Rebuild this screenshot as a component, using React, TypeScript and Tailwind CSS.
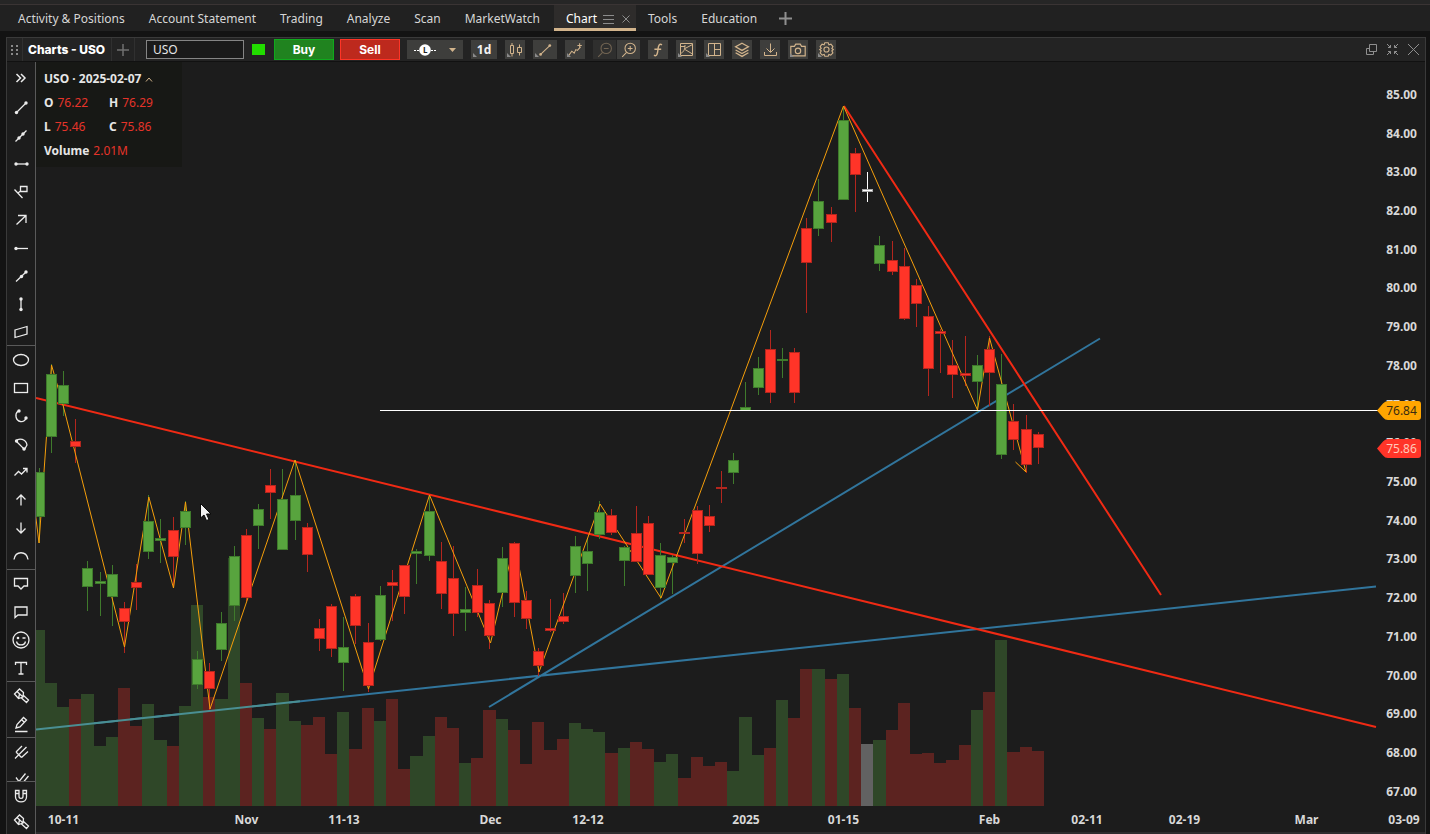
import React from "react";

/* ---------- chart data ---------- */

type Kind = "u" | "d" | "n";
// [kind, body top, body bottom, wick top, wick bottom, volume top]
type Bar = [Kind, number, number, number, number, number];

const BARS: Bar[] = [
  ["u", 472, 517, 468, 543, 630],
  ["u", 374, 437, 364, 453, 683],
  ["u", 385, 404, 371, 416, 707],
  ["d", 441, 447, 419, 463, 699],
  ["u", 568, 587, 561, 611, 694],
  ["u", 581, 584, 572, 616, 746],
  ["u", 574, 597, 565, 626, 737],
  ["d", 608, 622, 602, 653, 688],
  ["d", 582, 588, 564, 610, 726],
  ["u", 521, 552, 495, 559, 704],
  ["u", 538, 541, 519, 563, 740],
  ["d", 530, 557, 517, 588, 746],
  ["u", 511, 528, 501, 545, 706],
  ["u", 659, 685, 651, 689, 605],
  ["d", 671, 689, 663, 710, 697],
  ["u", 623, 650, 612, 661, 699],
  ["u", 556, 606, 546, 621, 558],
  ["d", 535, 598, 529, 601, 683],
  ["u", 509, 526, 504, 549, 718],
  ["d", 485, 493, 469, 519, 729],
  ["u", 499, 550, 469, 550, 693],
  ["u", 495, 521, 460, 540, 721],
  ["d", 527, 555, 523, 572, 725],
  ["d", 628, 639, 619, 651, 717],
  ["d", 606, 649, 604, 657, 754],
  ["u", 647, 663, 617, 691, 712],
  ["d", 596, 626, 594, 644, 749],
  ["d", 642, 686, 623, 692, 708],
  ["u", 595, 640, 586, 641, 721],
  ["d", 582, 586, 570, 621, 699],
  ["d", 565, 597, 565, 614, 769],
  ["u", 551, 554, 549, 584, 756],
  ["u", 511, 556, 495, 561, 736],
  ["d", 561, 594, 542, 609, 717],
  ["d", 578, 614, 546, 636, 728],
  ["u", 609, 613, 587, 631, 763],
  ["d", 585, 613, 569, 617, 758],
  ["d", 603, 636, 600, 649, 710],
  ["u", 558, 593, 547, 607, 719],
  ["d", 543, 603, 542, 617, 730],
  ["d", 600, 619, 591, 629, 764],
  ["d", 651, 666, 648, 676, 722],
  ["d", 628, 631, 599, 632, 750],
  ["d", 616, 622, 593, 624, 739],
  ["u", 546, 576, 536, 593, 723],
  ["u", 551, 564, 538, 591, 729],
  ["u", 512, 535, 501, 539, 732],
  ["d", 515, 533, 509, 535, 753],
  ["u", 547, 561, 546, 586, 748],
  ["d", 533, 562, 506, 562, 742],
  ["d", 523, 575, 516, 575, 749],
  ["u", 555, 588, 543, 599, 762],
  ["u", 557, 563, 555, 594, 754],
  ["d", 532, 534, 519, 543, 778],
  ["d", 510, 554, 506, 564, 757],
  ["d", 516, 526, 505, 532, 766],
  ["d", 487, 489, 471, 503, 762],
  ["u", 460, 473, 453, 484, 771],
  ["u", 407, 411, 382, 411, 717],
  ["u", 368, 388, 357, 395, 755],
  ["d", 349, 393, 330, 403, 748],
  ["u", 359, 361, 348, 378, 700],
  ["d", 352, 393, 348, 403, 718],
  ["d", 228, 263, 218, 313, 669],
  ["u", 201, 229, 179, 236, 669],
  ["d", 214, 223, 207, 242, 679],
  ["u", 120, 200, 107, 200, 674],
  ["d", 153, 175, 148, 212, 708],
  ["n", 189, 192, 172, 202, 744],
  ["u", 245, 264, 236, 271, 740],
  ["d", 260, 272, 241, 275, 730],
  ["d", 266, 319, 248, 320, 703],
  ["d", 285, 304, 279, 327, 754],
  ["d", 316, 369, 306, 396, 753],
  ["d", 331, 334, 329, 373, 763],
  ["d", 365, 375, 340, 398, 760],
  ["d", 373, 376, 336, 386, 745],
  ["u", 365, 382, 355, 412, 710],
  ["d", 349, 373, 336, 406, 692],
  ["u", 384, 455, 354, 459, 640],
  ["d", 421, 440, 404, 450, 752],
  ["d", 429, 465, 415, 473, 747],
  ["d", 434, 448, 432, 464, 751],
];

const BODY = { u: "#58a43e", d: "#ff3428", n: "#ffffff" };
const EDGE = { u: "#3f7a2c", d: "#b3261e", n: "#a9a9a9" };
const WICK = { u: "#3f7a2c", d: "#b3261e", n: "#ffffff" };
const VOL = { u: "#2f4728", d: "#5c2320", n: "#626262" };

const column = (i: number) => Math.floor(39.12 + 12.185 * i);
const priceY = (p: number) => Math.floor(94.3 + (85 - p) * 38.72);

const PRICES = Array.from({ length: 19 }, (_, i) => 85 - i);
const DATES: [number, string][] = [
  [63.5, "10-11"],
  [246.5, "Nov"],
  [344, "11-13"],
  [490.5, "Dec"],
  [588, "12-12"],
  [746, "2025"],
  [843.5, "01-15"],
  [989.5, "Feb"],
  [1087, "02-11"],
  [1184.5, "02-19"],
  [1306.5, "Mar"],
  [1404, "03-09"],
];

const ZIGZAG =
  "30,470 39,543 51.5,365 63,405 124.5,647 148.8,497 173.5,588 185.5,502 210,709 295,460 368.5,689 429.5,495 490.5,643 514.5,543 539,672 600,504 661,598 843.5,106 977.5,410 989.5,338 1026,472 1015.5,462";

function PriceTag({ y, fill, color, label }: { y: number; fill: string; color: string; label: string }) {
  return (
    <g>
      <path
        d={`M1377 ${y}L1383 ${y - 7}Q1385 ${y - 9.5} 1388 ${y - 9.5}H1418Q1421 ${y - 9.5} 1421 ${y - 6.5}V${y + 6.5}Q1421 ${y + 9.5} 1418 ${y + 9.5}H1388Q1385 ${y + 9.5} 1383 ${y + 7}Z`}
        fill={fill}
      />
      <text x="1401.5" y={y + 4.5} textAnchor="middle" fill={color} className="text-[12px]">
        {label}
      </text>
    </g>
  );
}

function PriceChart() {
  return (
    <svg
      viewBox="36 62 1389 770"
      preserveAspectRatio="xMinYMin meet"
      className="block h-full w-full"
      role="img"
      aria-label="USO daily candlestick chart"
    >
      <g fill="none">
        <path d="M36 729.5L1376 586.5M489 707L1100 338.5" stroke="#31759c" strokeWidth="2" />
        <path d="M36 398L1376 727M844 106L1161 595" stroke="#f02a14" strokeWidth="2" />
      </g>
      <g shapeRendering="crispEdges">
        {BARS.map((b, i) => {
          const left = Math.max(36, column(i) - 6);
          return (
            <rect key={i} x={left} y={b[5]} width={column(i + 1) - 6 - left} height={806 - b[5]} fill={VOL[b[0]]} />
          );
        })}
      </g>
      <path d="M36 729.5L300 701.3" stroke="#4a8f93" strokeWidth="2" />
      <g shapeRendering="crispEdges">
        {BARS.map((b, i) => (
          <rect key={i} x={column(i)} y={b[3]} width={1} height={b[4] - b[3]} fill={WICK[b[0]]} />
        ))}
      </g>
      <polyline points={ZIGZAG} fill="none" stroke="#f59e0b" strokeWidth="1" />
      <g shapeRendering="crispEdges">
        {BARS.map((b, i) => {
          const left = Math.max(36, column(i) - 5);
          const width = column(i) + 6 - left;
          const height = b[2] - b[1];
          return (
            <g key={i}>
              <rect x={left} y={b[1]} width={width} height={height} fill={EDGE[b[0]]} />
              {height > 2 && (
                <rect x={left + 1} y={b[1] + 1} width={width - 2} height={height - 2} fill={BODY[b[0]]} />
              )}
            </g>
          );
        })}
      </g>
      <path d="M380 410.5H1378" stroke="#fff" strokeWidth="1" />

      <g fill="#d8d8d8" className="text-[12px] font-bold">
        {PRICES.map((p) => (
          <text key={p} x="1417" y={priceY(p) + 5} textAnchor="end">
            {p.toFixed(2)}
          </text>
        ))}
        {DATES.map(([x, label]) => (
          <text key={label} x={x} y="824" textAnchor="middle">
            {label}
          </text>
        ))}
      </g>
      <PriceTag y={410.5} fill="#ffa500" color="#3a2c10" label="76.84" />
      <PriceTag y={448.5} fill="#ff3428" color="#ffc9b8" label="75.86" />
      <path
        d="M200.5 503.5V518L204 515L206.500 520.500L209 519.500L206.500 514H211Z"
        fill="#f2f2f2"
        stroke="#0b0b0b"
        strokeWidth="1"
      />
    </svg>
  );
}

/* ---------- icons ---------- */

function Icon({ children, size = 20 }: { children: React.ReactNode; size?: number }) {
  return (
    <svg
      width={size}
      height={size}
      viewBox="0 0 20 20"
      fill="none"
      stroke="currentColor"
      strokeWidth="1.3"
      aria-hidden="true"
      className="shrink-0"
    >
      {children}
    </svg>
  );
}

// Icon drawn on a 16px grid so that its straight strokes fall on whole pixels.
function GridIcon({ d }: { d: string }) {
  return (
    <svg width="16" height="17" viewBox="0 0 16 17" fill="none" stroke="currentColor" aria-hidden="true" className="shrink-0">
      <path d={d} />
    </svg>
  );
}

const dot = (x: number, y: number) => <circle cx={x} cy={y} r="1.7" fill="currentColor" stroke="none" />;

const MARKER = (
  <Icon>
    <path d="M3.500 8L8.500 3L12.500 6.500L12 11L7.500 12.500ZM6 5.500L12 11M7.500 12.500L8.500 8M12.500 9.500L17.500 14L15.500 16.500L10.500 12" />
  </Icon>
);

const GROUP_LINES: [string, React.ReactNode][] = [
  ["Trend line", <Icon>{dot(5.5, 14.5)}{dot(15, 5)}<path d="M5.500 14.500L15 5" /></Icon>],
  ["Extended line", <Icon><path d="M4.500 15.500L15.500 4.500" />{dot(8, 12)}{dot(12, 8)}</Icon>],
  ["Segment", <Icon>{dot(5, 10)}{dot(16, 10)}<path d="M5 10H16" /></Icon>],
  ["Callout line", <Icon><path d="M3.500 7.500L11.500 16M9.500 4.500H16V9.500H9.500ZM7 11L9.500 9" /></Icon>],
  ["Arrow", <Icon><path d="M5.500 14.500L15 5.500M7 5.500H15V13" /></Icon>],
  ["Ray", <Icon>{dot(5, 10.5)}<path d="M5 10.500H17" /></Icon>],
  ["Angled ray", <Icon><path d="M5 15.500L15 6" />{dot(10.5, 10.5)}{dot(15, 6)}</Icon>],
  ["Vertical line", <Icon>{dot(10, 5)}{dot(10, 15.5)}<path d="M10 5V15" /></Icon>],
  ["Channel", <Icon><path d="M4 8L16 4.500V12L4 15.500Z" /></Icon>],
];

const GROUP_SHAPES: [string, React.ReactNode][] = [
  ["Ellipse", <Icon><ellipse cx="10" cy="10" rx="7.500" ry="5.500" /></Icon>],
  ["Rectangle", <Icon><rect x="3.500" y="5.500" width="13" height="9" /></Icon>],
  ["Arc", <Icon><path d="M7 5C3.500 8 4.500 14.500 9.500 15.500C12.500 16 14.500 14 15 12" />{dot(8, 5)}{dot(15, 12)}</Icon>],
  ["Sector", <Icon><path d="M5 7C8 3.500 15 5 16 11L13.500 15.500Z" />{dot(5.5, 7)}{dot(13, 15)}</Icon>],
  ["Zigzag arrow", <Icon><path d="M3.500 13.500L7.500 9.500L10.500 12L16 6.500M12 6.500H16V10.500" /></Icon>],
  ["Arrow up", <Icon><path d="M10 15.500V5M5.500 9.500L10 5L14.500 9.500" /></Icon>],
  ["Arrow down", <Icon><path d="M10 4.500V15M5.500 10.500L10 15L14.500 10.500" /></Icon>],
  ["Curve", <Icon><path d="M3 13.500C4.500 4.500 15.500 4.500 17 13.500" /></Icon>],
];

const GROUP_NOTES: [string, React.ReactNode][] = [
  ["Balloon", <Icon><path d="M3.500 4.500H16.500V12H13L10 15L7 12H3.500Z" /></Icon>],
  ["Comment", <Icon><path d="M4 5H16V13H7L4 15.500Z" /></Icon>],
  [
    "Emoji",
    <Icon>
      <circle cx="10" cy="10" r="8" />
      <path d="M5.500 11.500C6.500 16 13.500 16 14.500 11.500M11.500 8H14.500" />
      <circle cx="7" cy="8" r="1.300" fill="currentColor" stroke="none" />
    </Icon>,
  ],
  ["Text", <Icon><path d="M4.500 7V4.500H15.500V7M10 4.500V16M7.500 16H12.500" /></Icon>],
];

const GROUP_DRAW: [string, React.ReactNode][] = [
  ["Brush", MARKER],
  ["Pencil", <Icon><path d="M5 14L6 10.500L12.500 3.500L15.500 6L9 13Z M4 17.500H16.500M10.500 5.500L13.500 8.500" /></Icon>],
];

const PITCHFORK = (
  <Icon>
    <path d="M4 16.500L7.500 13M5 10L10.500 15.500M5 10L11 4M7.500 13L15.500 5M10.500 15.500L17 9.500" />
  </Icon>
);

function ToolGroup({ tools }: { tools: [string, React.ReactNode][] }) {
  return (
    <div className="relative flex shrink-0 flex-col after:absolute after:bottom-0 after:h-px after:w-full after:bg-[#5a5a5a]">
      {tools.map(([label, icon]) => (
        <button key={label} aria-label={label} className="flex h-7 items-center justify-center">
          {icon}
        </button>
      ))}
    </div>
  );
}

function Sidebar() {
  return (
    <aside className="flex w-[29px] shrink-0 flex-col border-r border-[#5a5a5a] bg-[#1c1c1c] text-[#ececec]">
      <div className="flex min-h-0 flex-1 flex-col overflow-hidden">
        <button aria-label="Expand tools" className="flex h-8 shrink-0 items-center justify-center">
          <Icon><path d="M5.500 6L9.500 10L5.500 14M10 6L14 10L10 14" strokeWidth="1.500" /></Icon>
        </button>
        <ToolGroup tools={GROUP_LINES} />
        <ToolGroup tools={GROUP_SHAPES} />
        <ToolGroup tools={GROUP_NOTES} />
        <ToolGroup tools={GROUP_DRAW} />
        <button aria-label="Pitchfork" className="flex h-7 shrink-0 items-center justify-center">{PITCHFORK}</button>
        <button aria-label="Fan" className="flex h-7 shrink-0 items-center justify-center">
          <Icon><path d="M14.500 3.500L6 14M17.500 6L10 15M5 7.500L9 13" /></Icon>
        </button>
      </div>
      <div className="flex shrink-0 flex-col border-t border-[#5a5a5a]">
        <button aria-label="Magnet" className="flex h-7 items-center justify-center">
          <Icon><path d="M4.500 4.500H8V10.500C8 13 12 13 12 10.500V4.500H15.500V11C15.500 17.500 4.500 17.500 4.500 11ZM4.500 7.500H8M12 7.500H15.500" /></Icon>
        </button>
        <button aria-label="Eraser" className="flex h-6 items-center justify-center">{MARKER}</button>
      </div>
    </aside>
  );
}

/* ---------- bars ---------- */

function Tab({ children }: { children: React.ReactNode }) {
  return (
    <a href="#" className="flex items-center px-3 pt-0.5 text-[#d6d6d6]">
      {children}
    </a>
  );
}

function NavTabs() {
  return (
    <nav className="flex h-[26px] shrink-0 bg-[#212121] pl-[6px] text-[12px] whitespace-nowrap">
      <Tab>Activity &amp; Positions</Tab>
      <Tab>Account Statement</Tab>
      <Tab>Trading</Tab>
      <Tab>Analyze</Tab>
      <Tab>Scan</Tab>
      <Tab>MarketWatch</Tab>
      <div className="ml-0.5 flex items-center border-b-3 border-[#d2b48c] bg-[#2e2c2b] pt-[5px] pr-1.5 pl-3 text-white">
        <a href="#" aria-current="page">Chart</a>
        <button aria-label="Tab menu" className="ml-1.5 text-[#8c8c8c]">
          <svg width="11" height="10" viewBox="0 0 11 10" className="block" stroke="currentColor">
            <path d="M0 1.500H11M0 5.500H11M0 9.500H11" />
          </svg>
        </button>
        <button aria-label="Close tab" className="ml-2 text-[#8c8c8c]">
          <svg width="8" height="8" viewBox="0 0 8 8" className="block" stroke="currentColor">
            <path d="M.5 .5L7.500 7.500M7.500 .5L.5 7.500" />
          </svg>
        </button>
      </div>
      <Tab>Tools</Tab>
      <Tab>Education</Tab>
      <button aria-label="Add tab" className="flex items-center pl-2.5 text-[#8f8f8f]">
        <svg width="13" height="13" viewBox="0 0 13 13" stroke="currentColor" strokeWidth="2">
          <path d="M6.500 0V13M0 6.500H13" />
        </svg>
      </button>
    </nav>
  );
}

function ToolButton({
  label,
  className = "w-5",
  corner = false,
  children,
}: {
  label: string;
  className?: string;
  corner?: boolean;
  children: React.ReactNode;
}) {
  return (
    <button
      aria-label={label}
      className={`relative flex h-[19px] shrink-0 items-center justify-center bg-[#3e3e3c] text-[#d2b48c] ${className}`}
    >
      {children}
      {corner && (
        <svg width="4" height="4" viewBox="0 0 4 4" className="absolute bottom-0.5 left-0.5" fill="#8a8a8a">
          <path d="M0 0V4H4Z" />
        </svg>
      )}
    </button>
  );
}

function Toolbar() {
  return (
    <header className="flex h-6 shrink-0 items-center border-b border-[#111111] bg-[#232323]">
      <div className="flex h-full w-4 items-center justify-center border-r border-[#303030] text-[#8a8a8a]">
        <svg width="8" height="12" viewBox="0 0 8 12" fill="currentColor">
          <path d="M0 1h2v2H0zM5 1h2v2H5zM0 5h2v2H0zM5 5h2v2H5zM0 9h2v2H0zM5 9h2v2H5z" />
        </svg>
      </div>
      <h1 className="w-[88px] shrink-0 pl-[5px] font-[Inter] text-[12px] font-extrabold whitespace-nowrap text-white">Charts - USO</h1>
      <button aria-label="Add panel" className="flex h-full w-6 shrink-0 items-center justify-center border-x border-[#303030] text-[#707070]">
        <svg width="12" height="12" viewBox="0 0 12 12" stroke="currentColor" strokeWidth="1.500">
          <path d="M6 0V12M0 6H12" />
        </svg>
      </button>
      <input
        aria-label="Symbol"
        defaultValue="USO"
        className="ml-[11px] h-[19px] w-[98px] shrink-0 border border-[#858585] bg-[#1a1a1a] px-1.5 text-[12px] text-[#e6e6e6] outline-none"
      />
      <span className="ml-2 h-[11px] w-[13px] shrink-0 bg-[#22dd00]" />
      <button className="ml-[9px] h-[21px] w-15 shrink-0 border border-[#0faa1c] bg-[#20831f] font-[Inter] text-[12px] font-bold text-white">
        Buy
      </button>
      <button className="ml-1.5 h-[21px] w-15 shrink-0 border border-[#ff3426] bg-[#bd291d] font-[Inter] text-[12px] font-bold text-white">
        Sell
      </button>
      <div className="ml-[7px] flex shrink-0">
        <ToolButton label="Line style" className="w-9">
          <svg width="24" height="12" viewBox="0 0 24 12">
            <path d="M1 6.500H6M18 6.500H24" stroke="#fff" strokeDasharray="2 1" />
            <circle cx="12" cy="6" r="5.800" fill="#fff" />
            <text x="12.200" y="9" textAnchor="middle" fill="#222" className="text-[8px] font-bold">L</text>
          </svg>
        </ToolButton>
        <ToolButton label="Line style options" className="w-5 pr-0.5">
          <svg width="7" height="4" viewBox="0 0 7 4" fill="currentColor">
            <path d="M0 0H7L3.500 4Z" />
          </svg>
        </ToolButton>
      </div>
      <div className="ml-2 flex shrink-0 gap-2">
        <ToolButton label="Time frame" className="w-[26px]" corner>
          <span className="text-[12px] font-bold text-[#f2f2f2]">1d</span>
        </ToolButton>
        <ToolButton label="Chart type" corner>
          <GridIcon d="M3.500 4.500H6.500V12.500H3.500ZM5 2V4M5 13V15.500M10.500 6.500H14.500V11.500H10.500ZM12.500 3.500V6M12.500 12V14.500" />
        </ToolButton>
        <ToolButton label="Draw line" className="w-6" corner>
          <Icon size={16}>{dot(4.5, 15.5)}{dot(16, 4.5)}<path d="M4.500 15.500L16 4.500" /></Icon>
        </ToolButton>
        <ToolButton label="Add study" corner>
          <Icon size={16}><path d="M2 17L6 11.500L9 14L11 9.500L13 10.500L17 6M13 4.500H18.500M15.800 1.500V7.500" /></Icon>
        </ToolButton>
        <div className="flex gap-px">
          <ToolButton label="Zoom out" className="w-[23px] opacity-45">
            <Icon size={16}><circle cx="11.500" cy="8" r="6.500" /><path d="M7 13L1.500 18.500M8.500 8H14.500" /></Icon>
          </ToolButton>
          <ToolButton label="Zoom in" className="w-[23px]">
            <Icon size={16}><circle cx="11.500" cy="8" r="6.500" /><path d="M7 13L1.500 18.500M8.500 8H14.500M11.500 5V11" /></Icon>
          </ToolButton>
        </div>
        <ToolButton label="Functions">
          <Icon size={16}><path d="M15 3.500C11.500 1.500 10.500 5 10 9C9.500 14 8.500 19 5 16.500M5.500 9H14" strokeWidth="1.800" /></Icon>
        </ToolButton>
        <ToolButton label="Patterns" corner>
          <GridIcon d="M2.500 2.500H14.500V14.500H2.500ZM2.500 12.500C6 11 7 8 7 4M7 7.500L14.500 3.500M7 8.500L14.500 13M2.500 5.500H7" />
        </ToolButton>
        <ToolButton label="Layout" corner>
          <GridIcon d="M2.500 2.500H14.500V14.500H2.500ZM8.500 2.500V14.500M8.500 8.500H14.500" />
        </ToolButton>
        <ToolButton label="Layers">
          <Icon size={16}><path d="M10 1.500L18 6L10 10.500L2 6ZM2 10L10 14.500L18 10M2 13.500L10 18L18 13.500" strokeWidth="1.600" /></Icon>
        </ToolButton>
        <ToolButton label="Download">
          <GridIcon d="M8.500 2.500V11M4.500 7.500L8.500 11.500L12.500 7.500M2.500 11V14.500H14.500V11" />
        </ToolButton>
        <ToolButton label="Screenshot" corner>
          <Icon size={18}><path d="M2 6H6L7.500 3.500H12.500L14 6H18V16.500H2Z" /><circle cx="10" cy="11" r="3" /></Icon>
        </ToolButton>
        <ToolButton label="Settings" corner>
          <Icon size={17}>
            <path d="M8 2H12L12.800 4.500L15.200 3.800L17.500 6.500L16.300 8.800L18 10L16.300 11.500L17.500 14L15 16.500L12.800 15.800L12 18H8L7.300 15.800L5 16.500L2.500 14L3.800 11.500L2 10L3.800 8.700L2.500 6.500L4.800 3.800L7.200 4.500Z" />
            <circle cx="10" cy="10" r="3" />
          </Icon>
        </ToolButton>
      </div>
      <div className="mr-1.5 ml-auto flex items-center gap-2.5 text-[#8f8f8f]">
        <button aria-label="Detach">
          <svg width="11" height="11" viewBox="0 0 11 11" fill="none" stroke="currentColor" className="block">
            <path d="M3.500 .5H10.500V7.500H3.500ZM3 4.500H.5V10.500H7.500V8" />
          </svg>
        </button>
        <button aria-label="Shrink">
          <svg width="11" height="11" viewBox="0 0 11 11" fill="none" stroke="currentColor" className="block">
            <path d="M0 0L3.500 3.500M1 3.500H3.500V1M11 0L7.500 3.500M7.500 1V3.500H10M0 11L3.500 7.500M1 7.500H3.500V10M11 11L7.500 7.500M10 7.500H7.500V10" />
          </svg>
        </button>
        <button aria-label="Close">
          <svg width="11" height="11" viewBox="0 0 11 11" fill="none" stroke="currentColor" className="block">
            <path d="M0 0L11 11M11 0L0 11" />
          </svg>
        </button>
      </div>
    </header>
  );
}

function Quote({ label, value }: { label: string; value: string }) {
  return (
    <div className="flex w-[65px] gap-1">
      <dt className="font-bold text-[#e6e6e6]">{label}</dt>
      <dd className="text-[#e5342a]">{value}</dd>
    </div>
  );
}

function QuoteBox() {
  return (
    <section className="absolute top-0 left-0 h-[105px] w-[146px] bg-[#171815] pt-[5px] pl-2 text-[12px] leading-6">
      <h2 className="flex items-center gap-1 font-bold text-[#e6e6e6]">
        USO · 2025-02-07
        <svg width="8" height="5" viewBox="0 0 8 5" fill="none" stroke="#d2b48c">
          <path d="M1 4.500L4 1L7 4.500" />
        </svg>
      </h2>
      <dl className="flex flex-wrap">
        <Quote label="O" value="76.22" />
        <Quote label="H" value="76.29" />
        <Quote label="L" value="75.46" />
        <Quote label="C" value="75.86" />
        <Quote label="Volume" value="2.01M" />
      </dl>
    </section>
  );
}

export default function App() {
  return (
    <div className="flex h-screen flex-col overflow-hidden bg-[#131313] font-['Noto_Sans',sans-serif]">
      <div className="h-[5px] shrink-0 border-b border-[#3a3434] bg-[#262626]" />
      <NavTabs />
      <main className="mt-1.5 mr-1 ml-1.5 flex min-h-0 flex-1 flex-col border-x border-t border-[#3a3a3a] bg-[#1c1c1c]">
        <Toolbar />
        <div className="flex min-h-0 flex-1">
          <Sidebar />
          <div className="relative min-w-0 flex-1 border-b-2 border-[#2e2c2e]">
            <PriceChart />
            <QuoteBox />
          </div>
        </div>
      </main>
    </div>
  );
}
